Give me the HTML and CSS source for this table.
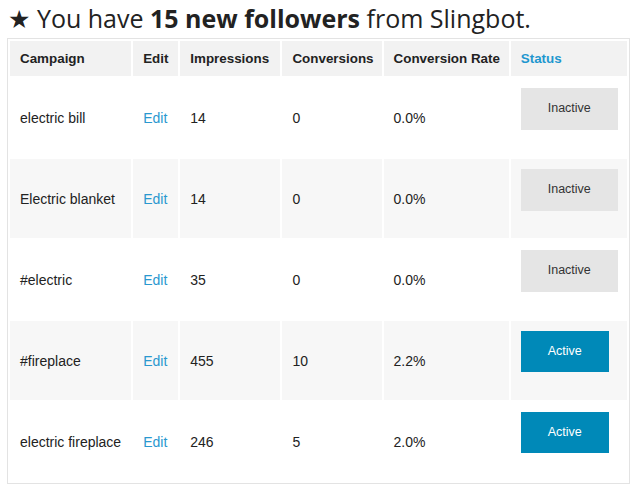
FILE: index.html
```html
<!DOCTYPE html>
<html>
<head>
<meta charset="utf-8">
<link rel="stylesheet" href="styles.css">
</head>
<body>
<h1 class="title"><span class="star">★</span> You have <b>15 new followers</b> from Slingbot.</h1>
<table class="campaigns">
  <thead>
    <tr>
      <th class="c-name">Campaign</th>
      <th class="c-edit">Edit</th>
      <th class="c-imp">Impressions</th>
      <th class="c-conv">Conversions</th>
      <th class="c-rate">Conversion Rate</th>
      <th class="c-status">Status</th>
    </tr>
  </thead>
  <tbody>
    <tr>
      <td>electric bill</td>
      <td><a class="edit" href="#">Edit</a></td>
      <td>14</td>
      <td>0</td>
      <td>0.0%</td>
      <td class="status"><span class="btn inactive">Inactive</span></td>
    </tr>
    <tr class="alt">
      <td>Electric blanket</td>
      <td><a class="edit" href="#">Edit</a></td>
      <td>14</td>
      <td>0</td>
      <td>0.0%</td>
      <td class="status"><span class="btn inactive">Inactive</span></td>
    </tr>
    <tr>
      <td>#electric</td>
      <td><a class="edit" href="#">Edit</a></td>
      <td>35</td>
      <td>0</td>
      <td>0.0%</td>
      <td class="status"><span class="btn inactive">Inactive</span></td>
    </tr>
    <tr class="alt">
      <td>#fireplace</td>
      <td><a class="edit" href="#">Edit</a></td>
      <td>455</td>
      <td>10</td>
      <td>2.2%</td>
      <td class="status"><span class="btn active">Active</span></td>
    </tr>
    <tr>
      <td>electric fireplace</td>
      <td><a class="edit" href="#">Edit</a></td>
      <td>246</td>
      <td>5</td>
      <td>2.0%</td>
      <td class="status"><span class="btn active">Active</span></td>
    </tr>
  </tbody>
</table>
</body>
</html>
```
FILE: styles.css
```css
html, body {
  margin: 0;
  padding: 0;
  background: #fff;
}
body {
  padding: 0 0 0 7px;
  font-family: "Liberation Sans", Arial, sans-serif;
  color: #222;
}
.title {
  margin: 0;
  padding: 2px 0 0 1px;
  height: 38px;
  box-sizing: border-box;
  font-family: "Open Sans", "DejaVu Sans", sans-serif;
  font-weight: 400;
  font-size: 25px;
  line-height: 32px;
  color: #222;
  white-space: nowrap;
}
.title b {
  font-weight: 700;
}
.star {
  font-family: "DejaVu Sans", sans-serif;
  font-size: 25px;
}
.campaigns {
  width: 623px;
  table-layout: fixed;
  border: 1px solid #e3e3e3;
  border-spacing: 2px;
  font-size: 14px;
  color: #222;
  white-space: nowrap;
}
.campaigns th {
  background: #f2f2f2;
  text-align: left;
  font-weight: 700;
  font-size: 13.4px;
  height: 35px;
  padding: 0 10px;
  box-sizing: border-box;
  vertical-align: middle;
}
.c-name { width: 121px; }
.c-edit { width: 45px; }
.c-imp { width: 100px; }
.c-conv { width: 99px; }
.c-rate { width: 125px; }
.c-status { width: 116px; color: #1f97cf; }
.campaigns td {
  height: 79px;
  padding: 0 10px;
  box-sizing: border-box;
  vertical-align: middle;
  background: #fff;
}
.campaigns tr.alt td {
  background: #f7f7f7;
}
.campaigns td.status {
  vertical-align: top;
  padding-top: 10px;
}
.edit {
  color: #2a98cf;
  text-decoration: none;
}
.btn {
  display: inline-block;
  height: 42px;
  line-height: 40px;
  font-size: 12.5px;
  text-align: center;
  box-sizing: border-box;
}
.btn.inactive {
  background: #e5e5e5;
  color: #333;
  width: 97px;
}
.btn.active {
  background: #0089b8;
  color: #fff;
  width: 88px;
  height: 41px;
  line-height: 40px;
}
```
